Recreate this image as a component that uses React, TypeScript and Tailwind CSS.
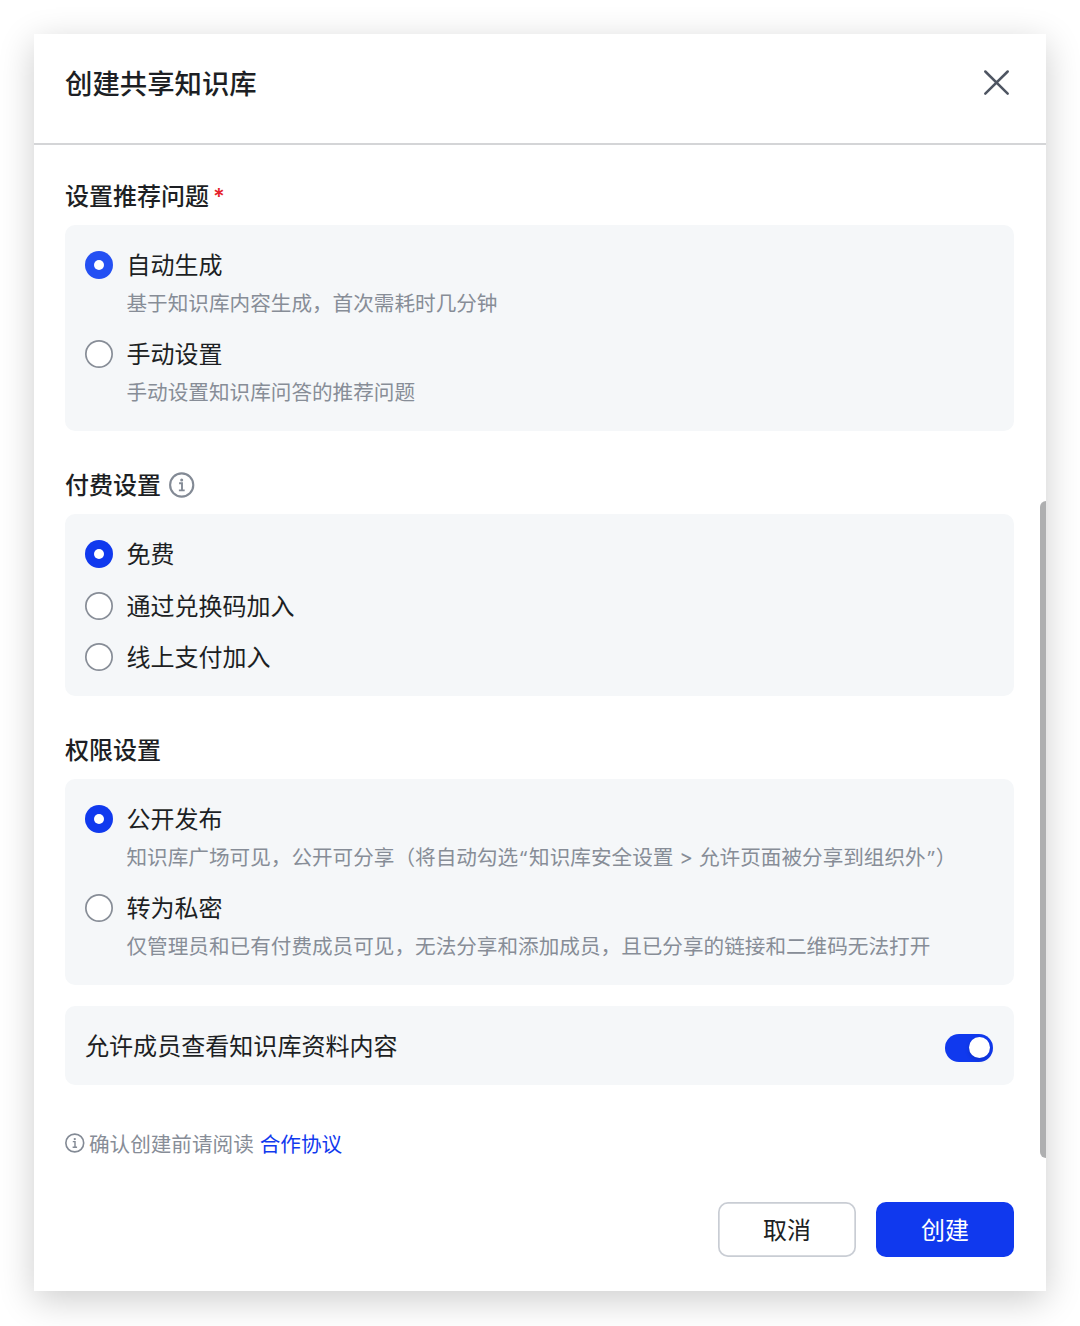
import { useState } from "react";

type Option = {
  label: string;
  desc?: React.ReactNode;
};

const questionOptions: Option[] = [
  { label: "自动生成", desc: "基于知识库内容生成，首次需耗时几分钟" },
  { label: "手动设置", desc: "手动设置知识库问答的推荐问题" },
];

const paymentOptions: Option[] = [
  { label: "免费" },
  { label: "通过兑换码加入" },
  { label: "线上支付加入" },
];

const permissionOptions: Option[] = [
  {
    label: "公开发布",
    desc: (
      <>
        知识库广场可见，公开可分享（将自动勾选
        <Quote>“</Quote>知识库安全设置<span className="font-['Inter'] px-[6px]">&gt;</span>
        允许页面被分享到组织外<Quote>”</Quote>
        <span className="-ml-px">）</span>
      </>
    ),
  },
  { label: "转为私密", desc: "仅管理员和已有付费成员可见，无法分享和添加成员，且已分享的链接和二维码无法打开" },
];

// Latin quotes, so they don't take a full CJK cell
function Quote({ children }: { children: React.ReactNode }) {
  return <span className="inline-block w-[11px] text-center font-['Open_Sans'] leading-6">{children}</span>;
}

function InfoIcon({ className }: { className: string }) {
  return (
    <svg viewBox="0 0 26 26" fill="none" stroke="#838a95" className={className}>
      <circle cx="12.7" cy="13" r="11.6" strokeWidth="2.1" />
      <path d="M10.1 11.2h2.9v7.2M9.9 18.4h5.8" strokeWidth="1.9" />
      <circle cx="12.7" cy="7.9" r="1.5" fill="#838a95" stroke="none" />
    </svg>
  );
}

function Radio({ checked, color }: { checked: boolean; color: string }) {
  if (!checked) {
    return <span className="size-7 shrink-0 rounded-full bg-white shadow-[inset_0_0_0_1.7px_#878d97]" />;
  }
  return (
    <span className={`flex size-7 shrink-0 items-center justify-center rounded-full ${color}`}>
      <span className="size-2.5 rounded-full bg-white" />
    </span>
  );
}

function RadioPanel({
  options,
  className,
  color = "bg-[#1039ee]",
}: {
  options: Option[];
  className: string;
  color?: string;
}) {
  const [selected, setSelected] = useState(0);

  return (
    <div role="radiogroup" className={`flex flex-col rounded-[10px] bg-[#f5f7f9] px-5 pt-5 ${className}`}>
      {options.map((option, i) => (
        <button
          key={option.label}
          type="button"
          role="radio"
          aria-checked={selected === i}
          onClick={() => setSelected(i)}
          className="text-left"
        >
          <div className="flex h-10 items-center gap-[13.5px]">
            <Radio checked={selected === i} color={color} />
            <span className="mb-0.5 text-[24px] leading-[38px]">{option.label}</span>
          </div>
          {option.desc && (
            <p className="h-9 whitespace-nowrap pl-[41.5px] text-[20.62px] leading-[34px] text-[#878d97]">{option.desc}</p>
          )}
        </button>
      ))}
    </div>
  );
}

export default function App() {
  const [visible, setVisible] = useState(true);

  return (
    <div className="h-[1326px] w-[1080px] overflow-hidden bg-white pl-[34px] pt-[34px] font-['Noto_Sans_CJK_SC',sans-serif] text-[#1d1f24]">
      <div className="relative flex h-[1257px] w-[1012px] flex-col bg-white shadow-[0_9px_34px_rgba(0,0,0,0.2)]">
        <header className="flex h-[111px] shrink-0 items-start justify-between border-b-2 border-[#d4d5d7] pl-[31px] pr-9 pt-7">
          <h1 className="text-[27.4px] font-medium leading-10">创建共享知识库</h1>
          <button type="button" aria-label="关闭" className="mt-[7px]">
            <svg viewBox="0 0 27 27" className="size-[27px]" stroke="#4e5562" strokeWidth="2.5" strokeLinecap="round">
              <path d="M2.3 2.5l22.4 22.2M24.7 2.5L2.3 24.7" />
            </svg>
          </button>
        </header>

        <main className="flex flex-col pl-[31px] pr-8">
          <h2 className="mt-[30px] flex h-[50px] items-start text-[24px] font-medium leading-10">
            设置推荐问题
            <span className="ml-1 font-['Inter'] text-[22px] font-semibold leading-[42px] text-[#e5232b]">*</span>
          </h2>
          <RadioPanel options={questionOptions} className="h-[206px] gap-[13px]" color="bg-[#2450f3]" />

          <h2 className="mt-[33px] flex h-[50px] items-start text-[24px] font-medium leading-10">
            付费设置
            <InfoIcon className="ml-2 mt-2 size-[26px]" />
          </h2>
          <RadioPanel options={paymentOptions} className="h-[182px] gap-[11.5px]" />

          <h2 className="mt-[33px] h-[50px] text-[24px] font-medium leading-10">权限设置</h2>
          <RadioPanel options={permissionOptions} className="h-[206px] gap-[13px]" />

          <div className="mt-[21px] flex h-[79px] items-center justify-between rounded-[10px] bg-[#f5f7f9] pl-5 pr-[21px]">
            <span className="mb-0.5 text-[24.05px] leading-10">允许成员查看知识库资料内容</span>
            <button
              type="button"
              role="switch"
              aria-checked={visible}
              onClick={() => setVisible(!visible)}
              className={`mt-1 flex h-7 w-12 items-center rounded-full px-[3.5px] ${visible ? "justify-end bg-[#1039ee]" : "bg-[#c9cdd4]"}`}
            >
              <span className="size-[21px] rounded-full bg-white shadow-[0_2px_4px_rgba(0,0,0,0.15)]" />
            </button>
          </div>

          <p className="mt-10 flex h-9 items-center text-[20.6px] leading-9 text-[#878d97]">
            <InfoIcon className="mr-1 size-5" />
            确认创建前请阅读
            <a href="#" className="ml-[6px] text-[#1039ee]">合作协议</a>
          </p>
        </main>

        <footer className="mt-[41px] flex gap-5 self-end pr-8">
          <button
            type="button"
            className="h-[55px] w-[138px] rounded-[10px] pb-0.5 text-[24px] shadow-[inset_0_0_0_1.7px_#c9cdd4]"
          >
            取消
          </button>
          <button type="button" className="h-[55px] w-[138px] rounded-[10px] bg-[#1039ee] pb-0.5 text-[24px] text-white">
            创建
          </button>
        </footer>

        {/* scrollbar thumb */}
        <div className="absolute right-0 top-[467px] h-[657px] w-[6px] rounded-l-[6px] bg-[#aeafb0]" />
      </div>
    </div>
  );
}
